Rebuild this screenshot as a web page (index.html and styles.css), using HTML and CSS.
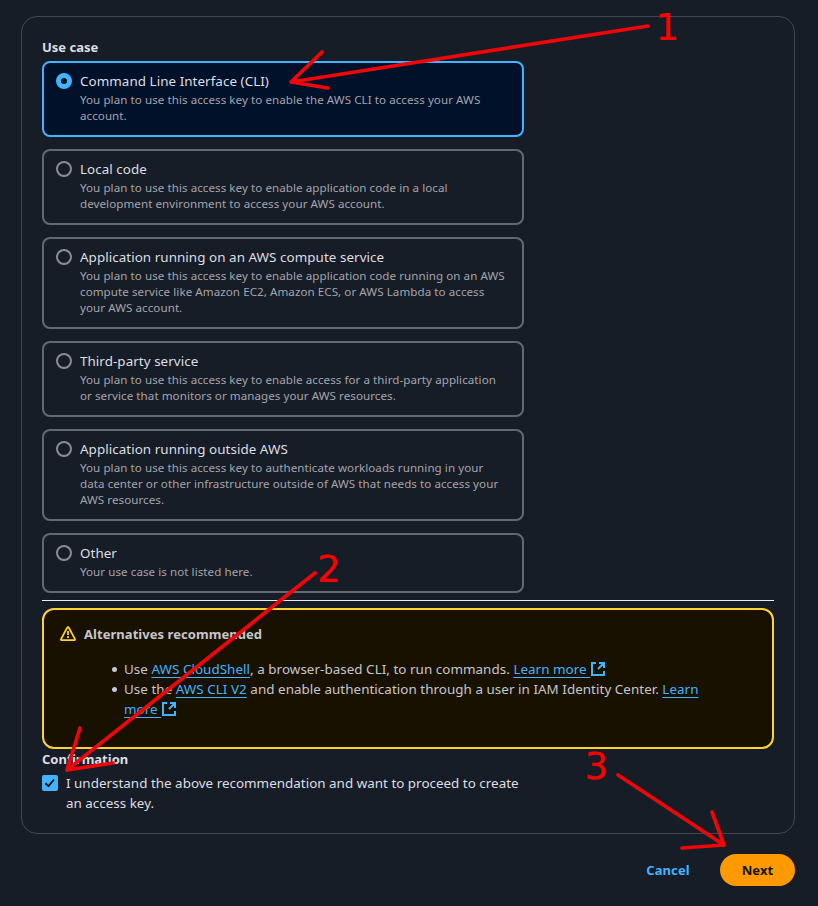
FILE: index.html
```html
<!DOCTYPE html>
<html lang="en">
<head>
<meta charset="utf-8">
<title>Create access key</title>
<link rel="stylesheet" href="styles.css">
</head>
<body>
<main class="panel">
  <h2 class="label">Use case</h2>
  <div class="tiles">
    <label class="tile selected"><span class="radio"></span><span class="copy"><span class="name">Command Line Interface (CLI)</span><span class="desc">You plan to use this access key to enable the AWS CLI to access your AWS<br>account.</span></span></label>
    <label class="tile"><span class="radio"></span><span class="copy"><span class="name">Local code</span><span class="desc">You plan to use this access key to enable application code in a local<br>development environment to access your AWS account.</span></span></label>
    <label class="tile"><span class="radio"></span><span class="copy"><span class="name">Application running on an AWS compute service</span><span class="desc">You plan to use this access key to enable application code running on an AWS<br>compute service like Amazon EC2, Amazon ECS, or AWS Lambda to access<br>your AWS account.</span></span></label>
    <label class="tile"><span class="radio"></span><span class="copy"><span class="name">Third-party service</span><span class="desc">You plan to use this access key to enable access for a third-party application<br>or service that monitors or manages your AWS resources.</span></span></label>
    <label class="tile"><span class="radio"></span><span class="copy"><span class="name">Application running outside AWS</span><span class="desc">You plan to use this access key to authenticate workloads running in your<br>data center or other infrastructure outside of AWS that needs to access your<br>AWS resources.</span></span></label>
    <label class="tile"><span class="radio"></span><span class="copy"><span class="name">Other</span><span class="desc">Your use case is not listed here.</span></span></label>
  </div>
  <hr class="rule">
  <section class="alert">
    <div class="alert-head">
      <svg class="warn" viewBox="0 0 16 16" width="16" height="16"><path d="M8 1.2Q8.6 1.2 9 2L15 13.2Q15.2 14.2 14.3 14.2H1.7Q.8 14.2 1 13.2L7 2Q7.4 1.2 8 1.2Z" fill="none" stroke="#ffd42e" stroke-width="1.7" stroke-linejoin="round"/><path d="M8 5V9M8 10V12" stroke="#ffd42e" stroke-width="1.8"/></svg>
      <strong>Alternatives recommended</strong>
    </div>
    <ul class="options">
      <li>Use <a>AWS CloudShell</a>, a browser-based CLI, to run commands. <a>Learn more </a><svg class="ext" viewBox="0 0 14 14" width="14" height="14"><path d="M5 1H1V13H13V9M8 1H13V6M12.5 1.5 7 7" fill="none" stroke="#42b4ff" stroke-width="2"/></svg></li>
      <li>Use the <a>AWS CLI V2</a> and enable authentication through a user in IAM Identity Center. <a>Learn<br>more </a><svg class="ext" viewBox="0 0 14 14" width="14" height="14"><path d="M5 1H1V13H13V9M8 1H13V6M12.5 1.5 7 7" fill="none" stroke="#42b4ff" stroke-width="2"/></svg></li>
    </ul>
  </section>
  <h2 class="label">Confirmation</h2>
  <label class="confirm">
    <span class="check"><svg viewBox="0 0 16 16" width="16" height="16"><path d="M3.5 8.3 6.5 11.2 12 4.5" fill="none" stroke="#0f141a" stroke-width="1.9"/></svg></span>
    <span>I understand the above recommendation and want to proceed to create<br>an access key.</span>
  </label>
</main>
<footer class="actions"><button class="cancel">Cancel</button><button class="next">Next</button></footer>
<svg class="marks" viewBox="0 0 818 906" width="818" height="906">
  <g class="arrows">
    <path d="M648 26 291 82M322 52 291 82 328 88"/>
    <path d="M315 573 67 770M80 728 67 770 113 763"/>
    <path d="M618 775 724 845M712 812 724 845 682 848"/>
  </g>
  <g class="digits"><text x="655.5" y="40">1</text><text x="317" y="582">2</text><text x="584.5" y="779">3</text></g>
</svg>
</body>
</html>
```
FILE: styles.css
```css
* { box-sizing: border-box; }
body {
  margin: 0;
  height: 906px;
  overflow: hidden;
  background: #171d26;
  color: #dedee3;
  font: 13px/20px "Noto Sans", sans-serif;
}
.panel {
  margin: 16px 23px 0 21px;
  height: 818px;
  padding: 20px;
  border: 1px solid #424650;
  border-radius: 16px;
}
.label { margin: 0; font-size: 13px; line-height: 20px; font-weight: 700; }
.tiles { display: grid; gap: 12px; width: 482px; margin-top: 4px; }
.tile {
  display: flex;
  gap: 8px;
  padding: 8px 12px 11px;
  border: 2px solid #656871;
  border-radius: 8px;
}
.radio { flex: none; width: 16px; height: 16px; margin-top: 2px; border: 2px solid #8c8c94; border-radius: 50%; }
.name, .desc { display: block; white-space: nowrap; }
.name { font-size: 13.4px; letter-spacing: 0.06px; }
.desc { margin-top: 1px; color: #a4a4ad; font-size: 11.6px; line-height: 16px; letter-spacing: 0.06px; }
.selected { border-color: #42b4ff; background: #001129; }
.selected .radio { border: 5px solid #42b4ff; background: #0f141a; }
.rule { height: 1px; margin: 7px 0; border: 0; background: #ebebf0; }
.alert {
  height: 141px;
  padding: 14px 16px;
  border: 2px solid #ffd42e;
  border-radius: 12px;
  background: #191100;
  color: #c6c6cd;
}
.alert-head { display: flex; align-items: center; gap: 8px; letter-spacing: 0.05px; }
.options { margin: 15px 0 0; padding-left: 64px; list-style: none; white-space: nowrap; font-size: 13.4px; letter-spacing: 0.05px; }
.options li::before {
  content: "";
  float: left;
  width: 5px;
  height: 5px;
  margin: 8px 0 0 -12px;
  border-radius: 50%;
  background: currentColor;
}
.options a {
  color: #42b4ff;
  text-decoration: underline 1px;
  text-underline-offset: 3px;
  text-decoration-skip-ink: none;
  white-space: pre-wrap;
}
.ext { margin-left: 1px; vertical-align: -2px; }
.confirm { display: flex; gap: 8px; margin-top: 4px; white-space: nowrap; font-size: 13.4px; letter-spacing: 0.02px; }
.check { flex: none; width: 16px; height: 16px; margin-top: 2px; border-radius: 2px; background: #42b4ff; }
.check svg { display: block; }
.actions { display: flex; justify-content: flex-end; margin: 20px 23px 0 0; }
.actions button { height: 32px; border: 0; border-radius: 16px; font: 700 13px/20px "Noto Sans", sans-serif; letter-spacing: 0.1px; }
.cancel { width: 84px; margin-right: 10px; padding: 0; background: none; color: #42b4ff; }
.next { width: 75px; padding: 0; background: #ff9900; color: #0f141a; }
.marks { position: absolute; left: 0; top: 0; pointer-events: none; }
.arrows { fill: none; stroke: #f00508; stroke-width: 3.7; stroke-linecap: round; stroke-linejoin: round; }
.digits { fill: #ff0000; stroke: #ff0000; stroke-width: 0.2; font: 37px "DejaVu Sans", sans-serif; }
```
